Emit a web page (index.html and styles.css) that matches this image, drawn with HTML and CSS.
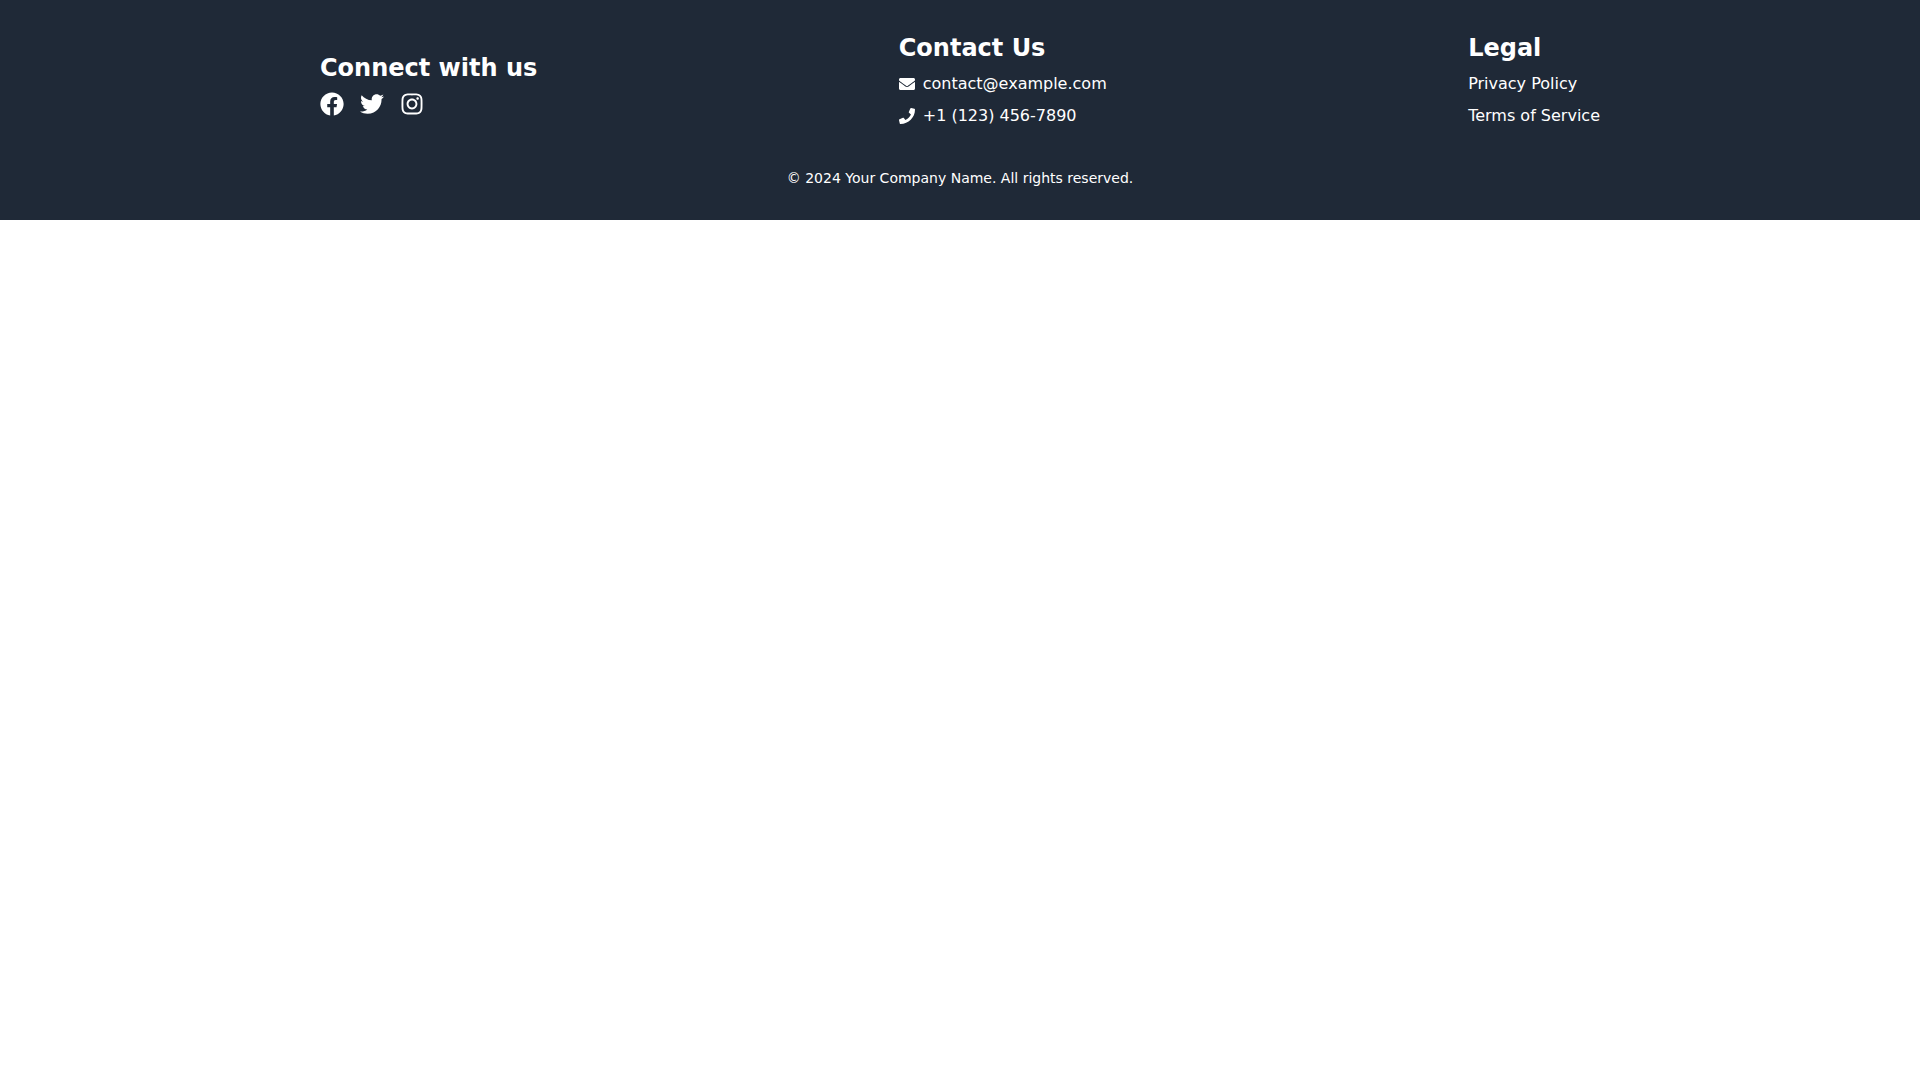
FILE: index.html
```html
<!DOCTYPE html>
<html>
<head>
    <meta charset="UTF-8">
    <title>Footer</title>
    <link rel="stylesheet" href="styles.css">
</head>
<body>
    <footer class="footer">
        <div class="container">
            <div class="columns">
                <div class="col">
                    <h3 class="title">Connect with us</h3>
                    <div class="social">
                        <a href="#" aria-label="Facebook">
                            <svg class="icon-lg" viewBox="0 0 512 512"><path d="M504 256C504 119 393 8 256 8S8 119 8 256c0 123.78 90.69 226.38 209.25 245V327.69h-63V256h63v-54.64c0-62.15 37-96.48 93.67-96.48 27.14 0 55.52 4.84 55.52 4.84v61h-31.28c-30.8 0-40.41 19.12-40.41 38.73V256h68.78l-11 71.69h-57.78V501C413.31 482.38 504 379.78 504 256z"/></svg>
                        </a>
                        <a href="#" aria-label="Twitter">
                            <svg class="icon-lg" viewBox="0 0 512 512"><path d="M459.37 151.716c.325 4.548.325 9.097.325 13.645 0 138.72-105.583 298.558-298.558 298.558-59.452 0-114.68-17.219-161.137-47.106 8.447.974 16.568 1.299 25.34 1.299 49.055 0 94.213-16.568 130.274-44.832-46.132-.975-84.792-31.188-98.112-72.772 6.498.974 12.995 1.624 19.818 1.624 9.421 0 18.843-1.3 27.614-3.573-48.081-9.747-84.143-51.98-84.143-102.985v-1.299c13.969 7.797 30.214 12.67 47.431 13.319-28.264-18.843-46.781-51.005-46.781-87.391 0-19.492 5.197-37.36 14.294-52.954 51.655 63.675 129.3 105.258 216.365 109.807-1.624-7.797-2.599-15.918-2.599-24.04 0-57.828 46.782-104.934 104.934-104.934 30.213 0 57.502 12.67 76.67 33.137 23.715-4.548 46.456-13.32 66.599-25.34-7.798 24.366-24.366 44.833-46.132 57.827 21.117-2.273 41.584-8.122 60.426-16.243-14.292 20.791-32.161 39.308-52.628 54.253z"/></svg>
                        </a>
                        <a href="#" aria-label="Instagram">
                            <svg class="icon-lg" viewBox="0 0 448 512"><path d="M224.1 141c-63.6 0-114.9 51.3-114.9 114.9s51.3 114.9 114.9 114.9S339 319.5 339 255.9 287.7 141 224.1 141zm0 189.6c-41.1 0-74.7-33.5-74.7-74.7s33.5-74.7 74.7-74.7 74.7 33.5 74.7 74.7-33.6 74.7-74.7 74.7zm146.4-194.3c0 14.9-12 26.8-26.8 26.8-14.9 0-26.8-12-26.8-26.8s12-26.8 26.8-26.8 26.8 12 26.8 26.8zm76.1 27.2c-1.7-35.9-9.9-67.7-36.2-93.9-26.2-26.2-58-34.4-93.9-36.2-37-2.1-147.9-2.1-184.9 0-35.8 1.7-67.6 9.9-93.9 36.1s-34.4 58-36.2 93.9c-2.1 37-2.1 147.9 0 184.9 1.7 35.9 9.9 67.7 36.2 93.9s58 34.4 93.9 36.2c37 2.1 147.9 2.1 184.9 0 35.9-1.7 67.7-9.9 93.9-36.2 26.2-26.2 34.4-58 36.2-93.9 2.1-37 2.1-147.8 0-184.8zM398.8 388c-7.8 19.6-22.9 34.7-42.6 42.6-29.5 11.7-99.5 9-132.1 9s-102.7 2.6-132.1-9c-19.6-7.8-34.7-22.9-42.6-42.6-11.7-29.5-9-99.5-9-132.1s-2.6-102.7 9-132.1c7.8-19.6 22.9-34.7 42.6-42.6 29.5-11.7 99.5-9 132.1-9s102.7-2.6 132.1 9c19.6 7.8 34.7 22.9 42.6 42.6 11.7 29.5 9 99.5 9 132.1s2.7 102.7-9 132.1z"/></svg>
                        </a>
                    </div>
                </div>
                <div class="col">
                    <h3 class="title">Contact Us</h3>
                    <ul class="links">
                        <li>
                            <svg class="icon-sm" viewBox="0 0 512 512"><path d="M502.3 190.8c3.9-3.1 9.7-.2 9.7 4.7V400c0 26.5-21.5 48-48 48H48c-26.5 0-48-21.5-48-48V195.6c0-5 5.7-7.8 9.7-4.7 22.4 17.4 52.1 39.5 154.1 113.6 21.1 15.4 56.7 47.8 92.2 47.6 35.7.3 72-32.8 92.3-47.6 102-74.1 131.6-96.3 154-113.7zM256 320c23.2.4 56.6-29.2 73.4-41.4 132.7-96.3 142.8-104.7 173.4-128.7 5.8-4.5 9.2-11.5 9.2-18.9v-19c0-26.5-21.5-48-48-48H48C21.5 64 0 85.5 0 112v19c0 7.4 3.4 14.3 9.2 18.9 30.6 23.9 40.7 32.4 173.4 128.7 16.8 12.2 50.2 41.8 73.4 41.4z"/></svg>
                            <a href="#">contact@example.com</a>
                        </li>
                        <li>
                            <svg class="icon-sm" viewBox="0 0 512 512"><path d="M493.4 24.6l-104-24c-11.3-2.6-22.9 3.3-27.5 13.9l-48 112c-4.2 9.8-1.4 21.3 6.9 28l60.6 49.6c-36 76.7-98.9 140.5-177.2 177.2l-49.6-60.6c-6.8-8.3-18.2-11.1-28-6.9l-112 48C3.9 366.5-2 378.1.6 389.4l24 104C27.1 504.2 36.7 512 48 512c256.1 0 464-207.5 464-464 0-11.2-7.7-20.9-18.6-23.4z"/></svg>
                            <a href="#">+1 (123) 456-7890</a>
                        </li>
                    </ul>
                </div>
                <div class="col">
                    <h3 class="title">Legal</h3>
                    <ul class="links">
                        <li><a href="#">Privacy Policy</a></li>
                        <li><a href="#">Terms of Service</a></li>
                    </ul>
                </div>
            </div>
            <p class="copyright">© 2024 Your Company Name. All rights reserved.</p>
        </div>
    </footer>
</body>
</html>
```

FILE: styles.css
```css
body, div, h3, p, ul, li {
    margin: 0;
    padding: 0;
}
ul {
    list-style: none;
}
a {
    color: inherit;
    text-decoration: none;
}
body {
    background-color: #ffffff;
    font-family: "DejaVu Sans", sans-serif;
    font-size: 16px;
    line-height: 24px;
    -webkit-font-smoothing: antialiased;
}
.footer {
    background-color: #1f2937;
    color: #ffffff;
    padding: 32px 0;
}
.container {
    width: 1280px;
    margin: 0 auto;
}
.columns {
    display: flex;
    justify-content: space-between;
    align-items: center;
}
.title {
    font-size: 24px;
    line-height: 32px;
    font-weight: 700;
    margin-bottom: 8px;
}
.social {
    display: flex;
    gap: 16px;
    height: 24px;
}
.social a {
    display: block;
    height: 24px;
}
.links li {
    display: flex;
    align-items: center;
    margin-bottom: 8px;
}
.icon-lg {
    display: block;
    width: 24px;
    height: 24px;
    fill: #ffffff;
}
.icon-sm {
    width: 16px;
    height: 16px;
    fill: #ffffff;
    margin-right: 8px;
}
.copyright {
    margin-top: 32px;
    font-size: 14px;
    line-height: 20px;
    text-align: center;
}
```
